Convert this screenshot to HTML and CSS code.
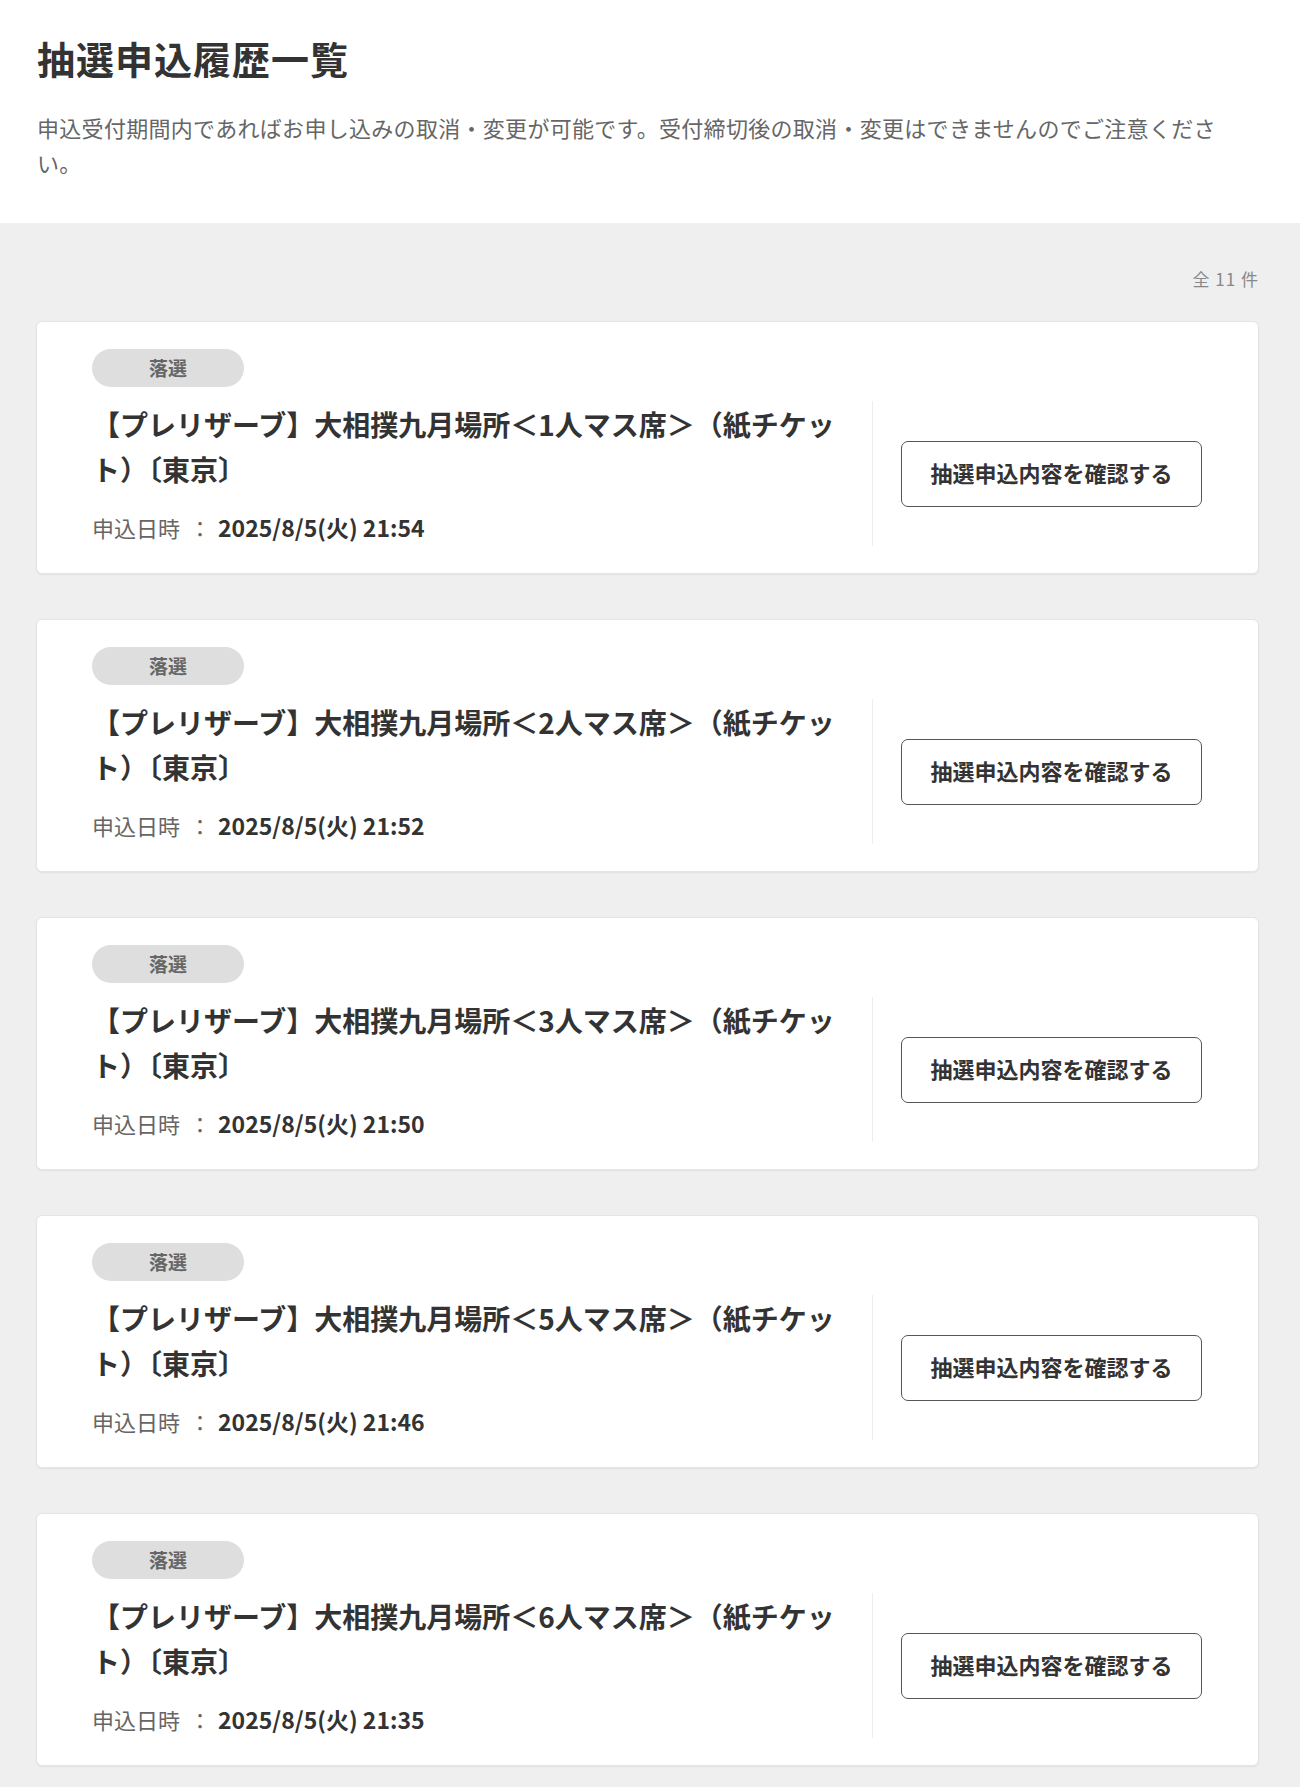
FILE: index.html
```html
<!DOCTYPE html>
<html lang="ja">
<head>
    <meta charset="UTF-8">
    <meta name="viewport" content="width=device-width, initial-scale=1.0">
    <title>抽選申込履歴一覧</title>
    <link rel="stylesheet" href="styles.css">
</head>
<body>
    <div class="page-head">
        <h1>抽選申込履歴一覧</h1>
        <p class="lead">申込受付期間内であればお申し込みの取消・変更が可能です。受付締切後の取消・変更はできませんのでご注意ください。</p>
    </div>

    <div class="history">
        <div class="count">全 11 件</div>

        <div class="entry">
            <span class="status">落選</span>
            <div class="entry-body">
                <div class="entry-info">
                    <div class="entry-title">【プレリザーブ】大相撲九月場所＜1人マス席＞（紙チケット）〔東京〕</div>
                    <div class="entry-date"><span class="label">申込日時</span><span class="sep">：</span><span class="value">2025/8/5(火) 21:54</span></div>
                </div>
                <div class="entry-action">
                    <button class="btn">抽選申込内容を確認する</button>
                </div>
            </div>
        </div>

        <div class="entry">
            <span class="status">落選</span>
            <div class="entry-body">
                <div class="entry-info">
                    <div class="entry-title">【プレリザーブ】大相撲九月場所＜2人マス席＞（紙チケット）〔東京〕</div>
                    <div class="entry-date"><span class="label">申込日時</span><span class="sep">：</span><span class="value">2025/8/5(火) 21:52</span></div>
                </div>
                <div class="entry-action">
                    <button class="btn">抽選申込内容を確認する</button>
                </div>
            </div>
        </div>

        <div class="entry">
            <span class="status">落選</span>
            <div class="entry-body">
                <div class="entry-info">
                    <div class="entry-title">【プレリザーブ】大相撲九月場所＜3人マス席＞（紙チケット）〔東京〕</div>
                    <div class="entry-date"><span class="label">申込日時</span><span class="sep">：</span><span class="value">2025/8/5(火) 21:50</span></div>
                </div>
                <div class="entry-action">
                    <button class="btn">抽選申込内容を確認する</button>
                </div>
            </div>
        </div>

        <div class="entry">
            <span class="status">落選</span>
            <div class="entry-body">
                <div class="entry-info">
                    <div class="entry-title">【プレリザーブ】大相撲九月場所＜5人マス席＞（紙チケット）〔東京〕</div>
                    <div class="entry-date"><span class="label">申込日時</span><span class="sep">：</span><span class="value">2025/8/5(火) 21:46</span></div>
                </div>
                <div class="entry-action">
                    <button class="btn">抽選申込内容を確認する</button>
                </div>
            </div>
        </div>

        <div class="entry">
            <span class="status">落選</span>
            <div class="entry-body">
                <div class="entry-info">
                    <div class="entry-title">【プレリザーブ】大相撲九月場所＜6人マス席＞（紙チケット）〔東京〕</div>
                    <div class="entry-date"><span class="label">申込日時</span><span class="sep">：</span><span class="value">2025/8/5(火) 21:35</span></div>
                </div>
                <div class="entry-action">
                    <button class="btn">抽選申込内容を確認する</button>
                </div>
            </div>
        </div>
    </div>
</body>
</html>
```

FILE: styles.css
```css
body {
    margin: 0;
    font-family: "Noto Sans CJK JP", "Noto Sans", sans-serif;
    color: #333;
    background-color: #efefef;
}
.page-head {
    background: #fff;
    padding: 32px 50px 43px 37px;
}
h1 {
    margin: 0;
    font-size: 38px;
    line-height: 52px;
    letter-spacing: 1px;
    font-weight: 700;
    color: #333;
}
.lead {
    margin: 26px 0 0;
    font-size: 22px;
    line-height: 35px;
    letter-spacing: 0.3px;
    color: #666;
}
.history {
    padding: 44px 41px 40px 36px;
}
.count {
    text-align: right;
    font-size: 17px;
    line-height: 24px;
    letter-spacing: 1px;
    color: #888;
    margin-bottom: 30px;
}
.entry {
    background: #fff;
    border: 1px solid #e4e4e4;
    border-radius: 6px;
    box-shadow: 0 1px 2px rgba(0, 0, 0, 0.06);
    padding: 27px 56px 27px 55px;
    margin-bottom: 45px;
}
.status {
    display: block;
    width: 152px;
    height: 38px;
    line-height: 38px;
    border-radius: 19px;
    background: #dedede;
    color: #666;
    font-size: 19px;
    font-weight: 700;
    text-align: center;
}
.entry-body {
    display: flex;
    height: 145px;
    margin-top: 14px;
}
.entry-info {
    flex: 1;
    padding-top: 1px;
}
.entry-title {
    font-size: 28px;
    line-height: 45px;
    font-weight: 700;
    color: #333;
}
.entry-date {
    display: flex;
    align-items: baseline;
    margin-top: 20px;
    line-height: 30px;
}
.entry-date .label {
    font-size: 22px;
    color: #666;
}
.entry-date .sep {
    font-size: 22px;
    color: #666;
    margin: 0 7px 0 9px;
}
.entry-date .value {
    font-size: 23px;
    font-weight: 700;
    color: #333;
}
.entry-action {
    width: 301px;
    padding-left: 28px;
    border-left: 1px solid #eee;
    display: flex;
    align-items: center;
}
.btn {
    width: 301px;
    height: 66px;
    padding: 0 0 3px;
    background: #fff;
    border: 1.5px solid #555;
    border-radius: 7px;
    font-family: inherit;
    font-size: 22px;
    font-weight: 700;
    color: #333;
    cursor: pointer;
}
```
